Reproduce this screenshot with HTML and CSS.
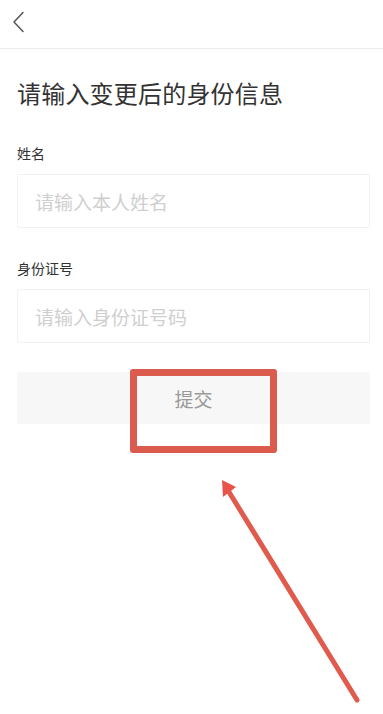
FILE: index.html
```html
<!DOCTYPE html>
<html lang="zh-CN">
<head>
<meta charset="utf-8">
<meta name="viewport" content="width=device-width, initial-scale=1">
<title>变更身份信息</title>
<link rel="stylesheet" href="styles.css">
</head>
<body>
<div class="page">
  <header class="nav">
    <svg class="back" width="14" height="22" viewBox="0 0 14 22" aria-label="返回">
      <path d="M11 1.5 L2 11 L11 20.5" fill="none" stroke="#555" stroke-width="1.5" stroke-linecap="round" stroke-linejoin="round"/>
    </svg>
  </header>
  <main class="content">
    <h1 class="title">请输入变更后的身份信息</h1>
    <label class="label">姓名</label>
    <input class="field" type="text" placeholder="请输入本人姓名">
    <label class="label label-2">身份证号</label>
    <input class="field" type="text" placeholder="请输入身份证号码">
    <button class="submit" type="button">提交</button>
  </main>
  <div class="highlight"></div>
  <svg class="arrow" width="383" height="714" viewBox="0 0 383 714">
    <line x1="229" y1="492" x2="357" y2="700" stroke="#e05b4e" stroke-width="5" stroke-linecap="round"/>
    <polygon points="222,480 236,487 223,497" fill="#e85449"/>
  </svg>
</div>
</body>
</html>
```

FILE: styles.css
```css
* { box-sizing: border-box; }
html, body {
  margin: 0;
  padding: 0;
  background: #fff;
}
body {
  font-family: "Noto Sans CJK SC", "Noto Sans", "Liberation Sans", sans-serif;
  color: #333;
}
.page {
  position: relative;
  width: 383px;
  height: 714px;
  overflow: hidden;
}
.nav {
  height: 49px;
  border-bottom: 1px solid #ebebeb;
  display: flex;
  align-items: center;
  padding-left: 12px;
}
.back { display: block; margin-top: -4px; }
.content {
  display: flex;
  flex-direction: column;
  padding: 0 13px 0 17px;
}
.title {
  margin: 32px 0 0;
  font-size: 24px;
  line-height: 24px;
  font-weight: 400;
  color: #333;
  letter-spacing: 0.2px;
}
.label {
  margin-top: 40px;
  font-size: 14px;
  line-height: 16px;
  color: #333;
}
.label-2 { margin-top: 32px; }
.field {
  margin-top: 13px;
  height: 54px;
  border: 1px solid #f2f2f2;
  border-radius: 2px;
  padding: 0 17px;
  font-family: inherit;
  font-size: 19px;
  color: #333;
  background: #fff;
  outline: none;
}
.field::placeholder { color: #cfcfcf; }
.submit {
  margin-top: 29px;
  height: 52px;
  border: none;
  border-radius: 2px;
  background: #f7f7f7;
  color: #999;
  font-family: inherit;
  font-size: 19px;
}
.highlight {
  position: absolute;
  left: 130px;
  top: 369px;
  width: 147px;
  height: 84px;
  border: 7px solid #dc5b4f;
  border-radius: 3px;
}
.arrow {
  position: absolute;
  left: 0;
  top: 0;
  pointer-events: none;
}
```
